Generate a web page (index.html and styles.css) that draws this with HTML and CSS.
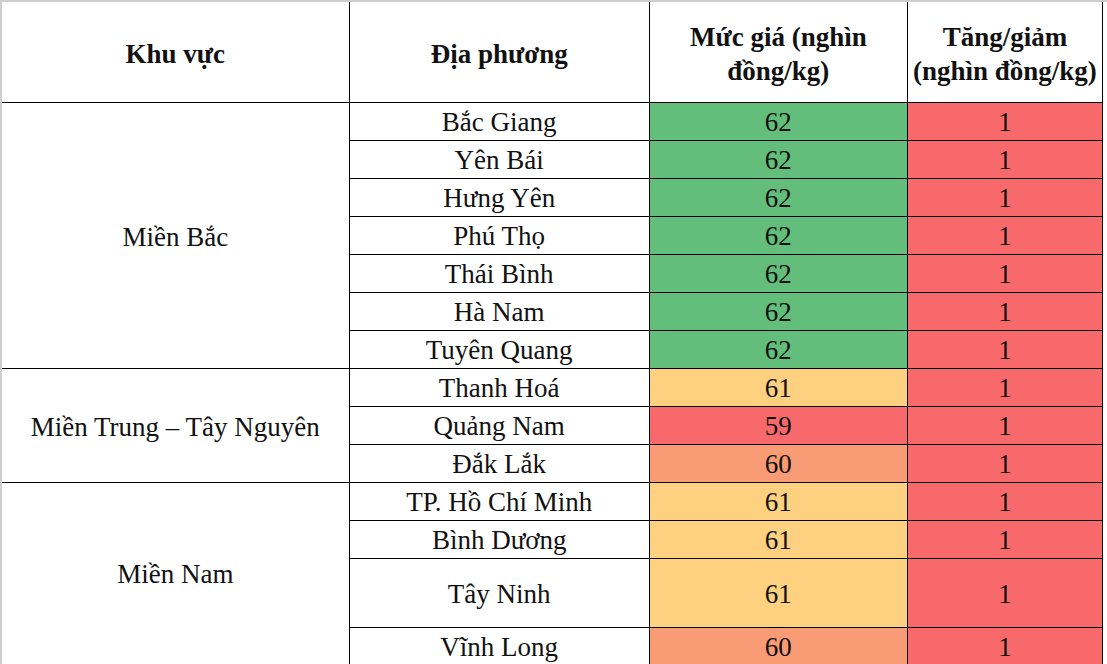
FILE: index.html
```html
<!DOCTYPE html>
<html lang="vi">
<head>
<meta charset="utf-8">
<title>Giá</title>
<link rel="stylesheet" href="styles.css">
</head>
<body>
<div class="frame">
<table class="prices">
  <colgroup>
    <col class="c1"><col class="c2"><col class="c3"><col class="c4">
  </colgroup>
  <thead>
    <tr>
      <th>Khu vực</th>
      <th>Địa phương</th>
      <th>Mức giá (nghìn<br>đồng/kg)</th>
      <th>Tăng/giảm<br>(nghìn đồng/kg)</th>
    </tr>
  </thead>
  <tbody>
    <tr><td rowspan="7" class="region">Miền Bắc</td><td>Bắc Giang</td><td class="g">62</td><td class="r">1</td></tr>
    <tr><td>Yên Bái</td><td class="g">62</td><td class="r">1</td></tr>
    <tr><td>Hưng Yên</td><td class="g">62</td><td class="r">1</td></tr>
    <tr><td>Phú Thọ</td><td class="g">62</td><td class="r">1</td></tr>
    <tr><td>Thái Bình</td><td class="g">62</td><td class="r">1</td></tr>
    <tr><td>Hà Nam</td><td class="g">62</td><td class="r">1</td></tr>
    <tr><td>Tuyên Quang</td><td class="g">62</td><td class="r">1</td></tr>
    <tr><td rowspan="3" class="region">Miền Trung – Tây Nguyên</td><td>Thanh Hoá</td><td class="y">61</td><td class="r">1</td></tr>
    <tr><td>Quảng Nam</td><td class="r">59</td><td class="r">1</td></tr>
    <tr><td>Đắk Lắk</td><td class="o">60</td><td class="r">1</td></tr>
    <tr><td rowspan="4" class="region south">Miền Nam</td><td>TP. Hồ Chí Minh</td><td class="y">61</td><td class="r">1</td></tr>
    <tr><td>Bình Dương</td><td class="y">61</td><td class="r">1</td></tr>
    <tr class="tall"><td>Tây Ninh</td><td class="y">61</td><td class="r">1</td></tr>
    <tr><td>Vĩnh Long</td><td class="o">60</td><td class="r">1</td></tr>
  </tbody>
</table>
</div>
</body>
</html>
```
FILE: styles.css
```css
html, body {
  margin: 0;
  padding: 0;
  background: #fff;
  overflow: hidden;
}
.frame {
  width: 1107px;
  height: 664px;
  box-sizing: border-box;
  border-top: 2px solid #cfcfcf;
  border-left: 2px solid #cfcfcf;
  overflow: hidden;
}
.prices {
  border-collapse: collapse;
  table-layout: fixed;
  width: 1101px;
  font-family: "Liberation Serif", "Times New Roman", serif;
  color: #111;
}
.c1 { width: 347px; }
.c2 { width: 300px; }
.c3 { width: 258px; }
.c4 { width: 195px; }
.prices th,
.prices td {
  border: 1px solid #000;
  text-align: center;
  vertical-align: middle;
  padding: 0;
}
.prices th {
  height: 100px;
  font-size: 27px;
  font-weight: bold;
  line-height: 34px;
  border-top: none;
  padding-top: 4px;
  box-sizing: border-box;
}
.prices th:first-child,
.prices td.region {
  border-left: none;
}
.prices td {
  height: 38px;
  font-size: 27px;
  line-height: 30px;
  padding-top: 2px;
  box-sizing: border-box;
}
.prices td.region {
  padding-top: 3px;
}
.prices td.south {
  vertical-align: top;
  padding-top: 76px;
}
.prices tr.tall td {
  height: 69px;
}
.g { background: #63be7b; }
.r { background: #f8696b; }
.y { background: #fdd17f; }
.o { background: #f99b74; }
```
